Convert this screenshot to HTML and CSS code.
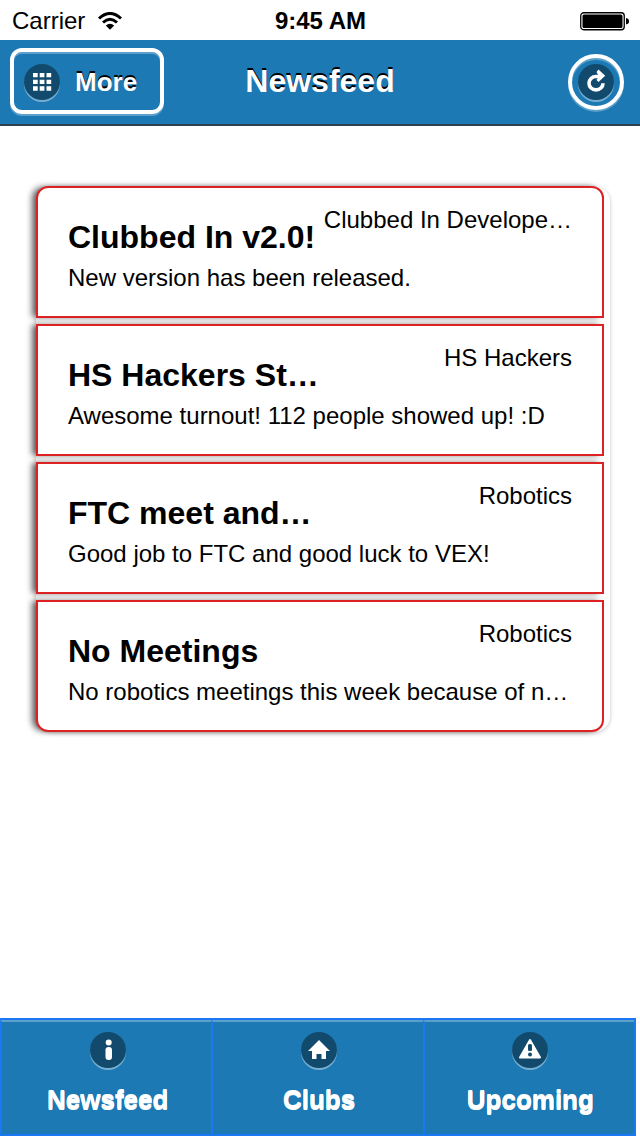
FILE: index.html
```html
<!DOCTYPE html>
<html lang="en">
<head>
<meta charset="utf-8">
<meta name="viewport" content="width=device-width">
<title>Newsfeed</title>
<link rel="stylesheet" href="styles.css">
</head>
<body>
<div class="status">
  <div class="carrier">Carrier
    <svg class="wifi" width="26" height="18" viewBox="0 0 26 18" aria-hidden="true"><g fill="none" stroke="#000" stroke-width="3"><path d="M2 6.500Q13-3.500 24 6.500"/><path d="M6 10.500Q13 4 20 10.500"/></g><path d="M8.800 13.500Q13 10 17.200 13.500L13 17.700Z"/></svg>
  </div>
  <time class="clock">9:45 AM</time>
  <svg class="battery" width="50" height="20" viewBox="0 0 50 20" aria-hidden="true"><rect x="1.750" y="1.750" width="43.500" height="17" rx="3" fill="none" stroke="#000" stroke-width="1.300"/><rect x="3.500" y="3.500" width="40" height="13.500" rx="1.500"/><path d="M47 7q3 .5 3 3.200T47 13.500Z"/></svg>
</div>
<header class="header">
  <button class="more" type="button">
    <span class="disc"><svg width="36" height="36" viewBox="0 0 36 36" aria-hidden="true"><path fill="#fff" d="M9 9h4.700v4.200H9zm6.700 0h4.700v4.200h-4.700zm6.800 0h4.700v4.200h-4.700zM9 15.700h4.700v4.200H9zm6.700 0h4.700v4.200h-4.700zm6.800 0h4.700v4.200h-4.700zM9 22.300h4.700v4.500H9zm6.700 0h4.700v4.500h-4.700zm6.800 0h4.700v4.500h-4.700z"/></svg></span>
    <span>More</span>
  </button>
  <h1 class="heading">Newsfeed</h1>
  <button class="refresh" type="button" aria-label="Refresh">
    <span class="disc"><svg width="36" height="36" viewBox="0 0 36 36" aria-hidden="true"><path d="M22 12.500h-4a7 6.700 0 1 0 7 6.700" fill="none" stroke="#fff" stroke-width="3.600"/><path d="M20.500 5.500l6.700 6.200-6.700 6.300-2-2 2.500-3.500-2.500-4.500z" fill="#fff"/></svg></span>
  </button>
</header>
<main class="content">
  <ul class="feed">
    <li class="item"><h2 class="title">Clubbed In v2.0!</h2><span class="club">Clubbed In Develope…</span><p class="text">New version has been released.</p></li>
    <li class="item"><h2 class="title">HS Hackers St…</h2><span class="club">HS Hackers</span><p class="text">Awesome turnout! 112 people showed up! :D</p></li>
    <li class="item"><h2 class="title">FTC meet and…</h2><span class="club">Robotics</span><p class="text">Good job to FTC and good luck to VEX!</p></li>
    <li class="item"><h2 class="title">No Meetings</h2><span class="club">Robotics</span><p class="text">No robotics meetings this week because of n…</p></li>
  </ul>
</main>
<nav class="tabs">
  <a class="tab" href="#newsfeed"><span class="disc"><svg width="36" height="36" viewBox="0 0 36 36" aria-hidden="true"><circle cx="18.700" cy="10.500" r="3" fill="#fff"/><rect x="15.500" y="15" width="6.500" height="13" rx="3" fill="#fff"/></svg></span><span>Newsfeed</span></a>
  <a class="tab" href="#clubs"><span class="disc"><svg width="36" height="36" viewBox="0 0 36 36" aria-hidden="true"><path fill="#fff" d="M18 8L29 19h-4v8h-4.500v-5h-5v5H11v-8H7z"/></svg></span><span>Clubs</span></a>
  <a class="tab" href="#upcoming"><span class="disc"><svg width="36" height="36" viewBox="0 0 36 36" aria-hidden="true"><path d="M18 8L28 25.500H8z" fill="#fff" stroke="#fff" stroke-width="2" stroke-linejoin="round"/><rect x="16" y="12" width="4" height="7" rx="1.500" fill="#114a6d"/><circle cx="18" cy="22.500" r="2" fill="#114a6d"/></svg></span><span>Upcoming</span></a>
</nav>
</body>
</html>
```
FILE: styles.css
```css
* {
  box-sizing: border-box;
}

body {
  margin: 0;
  min-height: 100vh;
  display: flex;
  flex-direction: column;
  background: #fff;
  color: #000;
  font-family: "Liberation Sans", Arial, Helvetica, sans-serif;
  font-size: 24px;
}

button {
  font: inherit;
  color: inherit;
  text-shadow: inherit;
  background: none;
  padding: 0;
}

.status {
  height: 40px;
  padding: 2px 11px 0 12px;
  display: grid;
  grid-template-columns: 1fr auto 1fr;
  align-items: center;
}

.carrier {
  display: flex;
  align-items: center;
  gap: 12px;
}

.clock {
  font-weight: bold;
}

.battery {
  justify-self: end;
}

.header {
  display: grid;
  grid-template-columns: 1fr auto 1fr;
  align-items: center;
  height: 86px;
  padding: 0 16px;
  background: #1c79b4;
  border-bottom: 2px solid #2d3e50;
  color: #fff;
  font-weight: bold;
  text-shadow: 0 -2px 0 #000;
}

.heading {
  margin: 0;
  padding-bottom: 2px;
  font-size: 32px;
  line-height: 40px;
}

.disc {
  width: 36px;
  height: 36px;
  border-radius: 50%;
  background: #114a6d;
  box-shadow: 0 2px 0 #77afd2;
}

.disc svg {
  display: block;
}

.more {
  justify-self: start;
  display: flex;
  align-items: center;
  gap: 15px;
  height: 66px;
  margin: 0 0 2px -6px;
  padding: 2px 23px 0 10px;
  border: 4px solid #fff;
  border-radius: 12px;
  font-size: 26px;
  box-shadow: 0 2px 0 #5b9fca, inset 0 2px 0 #5b9fca;
}

.refresh {
  justify-self: end;
  display: grid;
  place-items: center;
  width: 56px;
  height: 56px;
  border: 4px solid #fff;
  border-radius: 50%;
  box-shadow: 0 2px 0 #5b9fca, inset 0 2px 0 #5b9fca;
}

.content {
  flex: 1;
  padding: 60px 30px 60px 36px;
}

.feed {
  list-style: none;
  margin: 0;
  padding: 0 6px 0 0;
  display: flex;
  flex-direction: column;
  gap: 6px;
  border-radius: 16px;
  box-shadow: 0 1px 4px rgba(0, 0, 0, 0.22);
}

.item {
  display: grid;
  grid-template-columns: auto 1fr;
  column-gap: 8px;
  padding: 18px 30px 23px;
  border: 2px solid #dc2223;
  background: #fff;
  box-shadow: -5px 0 6px -1px rgba(0, 0, 0, 0.6);
  white-space: nowrap;
}

.item:first-child {
  border-radius: 12px 12px 0 0;
}

.item:last-child {
  border-radius: 0 0 12px 12px;
}

.title {
  margin: 0;
  padding-top: 12px;
  font-size: 32px;
  line-height: 38px;
}

.club {
  justify-self: end;
  line-height: 28px;
}

.text {
  grid-column: 1 / -1;
  margin: 0;
  padding-top: 7px;
  line-height: 30px;
}

.tabs {
  display: grid;
  grid-template-columns: repeat(3, 1fr);
  height: 118px;
  margin-right: 4px;
  background: #1c79b4;
  border: 2px solid #1a78f4;
  border-left-width: 0;
}

.tab {
  display: flex;
  flex-direction: column;
  align-items: center;
  gap: 15px;
  padding: 10px 0 0 2px;
  border-top: 2px solid #5b9fca;
  border-left: 2px solid #1a78f4;
  color: #fff;
  font-size: 26px;
  font-weight: bold;
  line-height: 32px;
  text-decoration: none;
  text-shadow: 0 1px 0 #fff, 0 2px 0 #fff;
}
```
